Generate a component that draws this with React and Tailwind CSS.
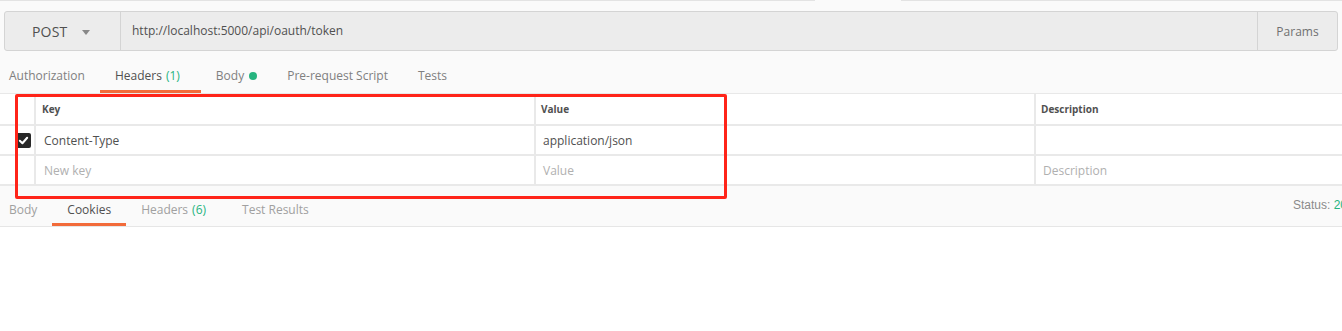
// Postman-style request builder: URL bar, request tabs, headers table, response tabs

const CheckIcon = () => (
  <svg width="11" height="11" viewBox="0 0 12 12" fill="none">
    <path d="M2 6.3 L4.8 9 L10 3" stroke="#fff" strokeWidth="2.2" strokeLinecap="round" strokeLinejoin="round" />
  </svg>
);

// wide = tabs carrying a count badge get a bit more room on the right
const Tab = ({ children, active, first, wide }) => (
  <div
    className={`flex items-center h-full pt-[11px] border-b-[3px] ${first ? 'pl-[9px]' : 'pl-[15px]'} ${wide ? 'pr-[21px]' : 'pr-[15px]'} ${
      active ? 'border-[#f26b3a] text-[#505050]' : 'border-transparent text-[#808080]'
    }`}
  >
    {children}
  </div>
);

const RespTab = ({ children, active, first, wide }) => (
  <div
    className={`flex items-center h-full pt-[10px] border-b-[3px] ${first ? 'pl-[9px]' : 'pl-[15px]'} ${wide ? 'pr-[21px]' : 'pr-[15px]'} ${
      active ? 'border-[#f26b3a] text-[#505050]' : 'border-transparent text-[#a0a0a0]'
    }`}
  >
    {children}
  </div>
);

const Row = ({ children, header }) => (
  <div className={`flex ${header ? 'h-[32px]' : 'h-[30px]'} border-b-2 border-[#e9e9e9] bg-white`}>
    {children}
  </div>
);

export default function App() {
  return (
    <div className="relative w-[1342px] h-[331px] overflow-hidden bg-white font-['Open_Sans',sans-serif] text-[12px]">
      {/* top strip */}
      <div className="bg-[#fafafa]">
        <div className="flex h-px">
          <div className="w-[815px] bg-[#e3e3e3]" />
          <div className="w-[86px]" />
          <div className="flex-1 bg-[#e3e3e3]" />
        </div>

        {/* URL bar */}
        <div className="pt-[10px] px-[4px]">
          <div className="flex h-[40px] border border-[#d4d4d4] rounded-[3px] bg-[#ececec]">
            <div className="w-[116px] flex items-center border-r border-[#d4d4d4] pl-[27px] pt-[1px]">
              <span className="text-[14px] text-[#505050] tracking-[0.2px]">POST</span>
              <svg className="ml-[14px] mt-[1px]" width="8" height="5" viewBox="0 0 8 5">
                <path d="M0 0 H8 L4 5 Z" fill="#888" />
              </svg>
            </div>
            <div className="flex-1 flex items-center pl-[11px] text-[#505050]">
              http://localhost:5000/api/oauth/token
            </div>
            <div className="w-[80px] flex items-center justify-center border-l border-[#d4d4d4] pt-[1px] text-[#707070]">
              Params
            </div>
          </div>
        </div>

        {/* request tabs */}
        <div className="flex h-[43px] border-b border-[#e8e8e8]">
          <Tab first>Authorization</Tab>
          <Tab active wide>
            Headers <span className="ml-[4px] text-[#26b47f]">(1)</span>
          </Tab>
          <Tab>
            Body <span className="ml-[5px] w-[8px] h-[8px] rounded-full bg-[#26b47f]" />
          </Tab>
          <Tab>Pre-request Script</Tab>
          <Tab>Tests</Tab>
        </div>
      </div>

      {/* headers table */}
      <div>
        <Row header>
          <div className="w-[36px] border-r-2 border-[#e9e9e9]" />
          <div className="w-[500px] border-r-2 border-[#e9e9e9] flex items-center pl-[6px] text-[10px] font-bold text-[#505050]">Key</div>
          <div className="w-[500px] border-r-2 border-[#e9e9e9] flex items-center pl-[5px] text-[10px] font-bold text-[#505050]">Value</div>
          <div className="flex-1 flex items-center pl-[5px] text-[10px] font-bold text-[#505050]">Description</div>
        </Row>
        <Row>
          <div className="w-[36px] border-r-2 border-[#e9e9e9] flex items-center pl-[16px]">
            <div className="w-[15px] h-[15px] rounded-[2px] bg-[#282828] flex items-center justify-center">
              <CheckIcon />
            </div>
          </div>
          <div className="w-[500px] border-r-2 border-[#e9e9e9] flex items-center pl-[8px] pt-[1px] text-[#505050]">Content-Type</div>
          <div className="w-[500px] border-r-2 border-[#e9e9e9] flex items-center pl-[7px] pt-[1px] text-[#505050]">application/json</div>
          <div className="flex-1" />
        </Row>
        <Row>
          <div className="w-[36px] border-r-2 border-[#e9e9e9]" />
          <div className="w-[500px] border-r-2 border-[#e9e9e9] flex items-center pl-[8px] pt-[1px] text-[#b0b0b0]">New key</div>
          <div className="w-[500px] border-r-2 border-[#e9e9e9] flex items-center pl-[7px] pt-[1px] text-[#b0b0b0]">Value</div>
          <div className="flex-1 flex items-center pl-[7px] pt-[1px] text-[#b0b0b0]">Description</div>
        </Row>
      </div>

      {/* response tabs */}
      <div className="flex h-[41px] bg-[#fafafa] border-b border-[#e6e6e6]">
        <div className="flex-1 flex">
          <RespTab first>Body</RespTab>
          <RespTab active>Cookies</RespTab>
          <RespTab wide>
            Headers <span className="ml-[4px] text-[#26b47f]">(6)</span>
          </RespTab>
          <RespTab>Test Results</RespTab>
        </div>
        <div className="w-[49px] shrink-0 flex items-center pb-[3px] whitespace-nowrap font-['Liberation_Sans',Arial,sans-serif] text-[12px] text-[#8a8a8a]">
          Status:&nbsp;<span className="text-[#26b47f]">200 OK</span>
        </div>
      </div>

      {/* annotation overlay */}
      <div className="absolute left-[15px] top-[94px] w-[712px] h-[105px] border-[3px] border-[#ff2419] rounded-[2px] pointer-events-none" />
    </div>
  );
}
